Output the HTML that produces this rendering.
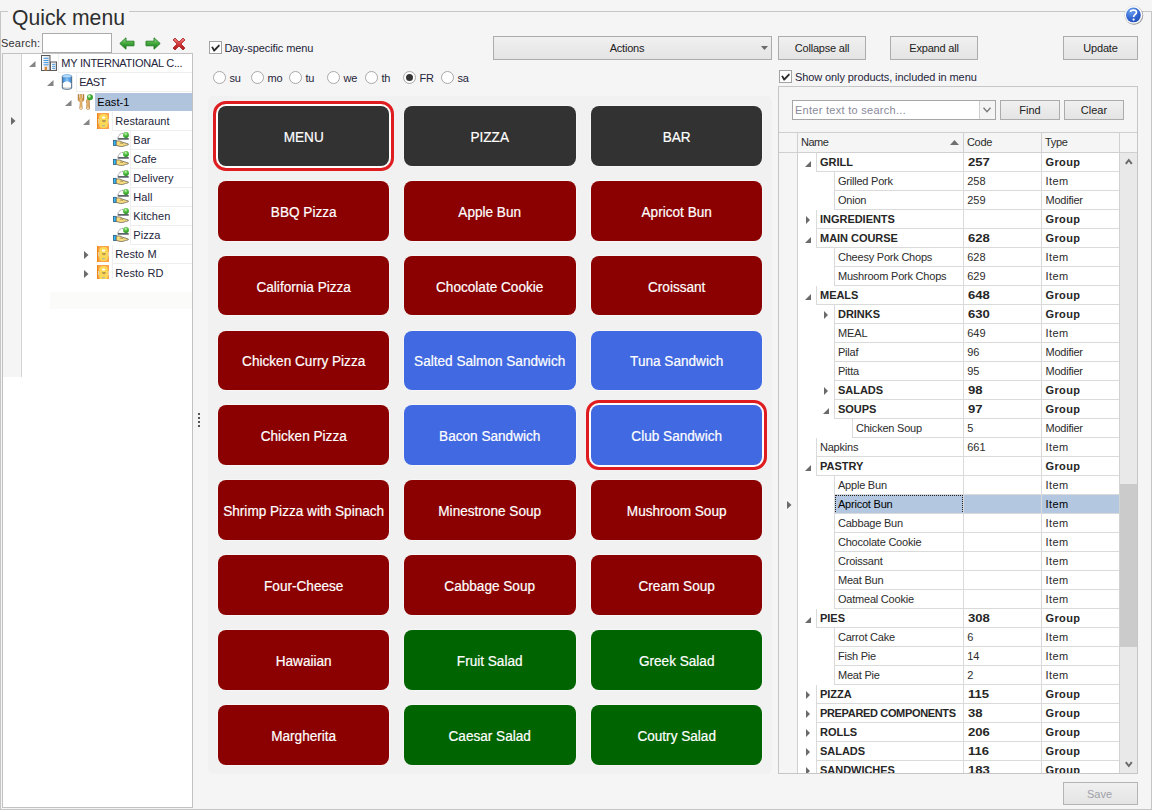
<!DOCTYPE html>
<html><head><meta charset="utf-8"><style>
*{box-sizing:border-box;margin:0;padding:0}
html,body{width:1152px;height:810px;overflow:hidden;background:#f5f5f5;font-family:"Liberation Sans",sans-serif;font-size:11px;color:#202020}
.a{position:absolute}
.t{position:absolute;white-space:nowrap;line-height:1}
.btn{position:absolute;border:1px solid #acacac;background:linear-gradient(#f0f0f0,#e4e4e4);}
.btn span{position:absolute;left:0;right:0;text-align:center;white-space:nowrap;line-height:1;color:#222}
.qb{position:absolute;border-radius:8px;color:#fff;font-size:14px;text-align:center;white-space:nowrap;box-shadow:0 0 0 0.5px rgba(255,255,255,0.75)}
.qb span{position:absolute;left:0;right:0;line-height:1;transform:scaleX(0.971);-webkit-text-stroke:0.2px #fff}
.ring{position:absolute;border:3px solid #df1c1f;border-radius:13px;background:#fff}
.g{position:absolute;white-space:nowrap;line-height:1;font-size:11px;letter-spacing:-0.32px;color:#2c2c2c}
.sel{color:#000}
.gb{font-weight:bold;letter-spacing:-0.38px;color:#262626}
</style></head><body>

<div class="a" style="left:0;top:11px;width:1152px;height:799px;border:1px solid #c6c6c6"></div>
<div class="a" style="left:8px;top:5px;width:121px;height:12px;background:#f5f5f5"></div>
<div class="t" style="left:12px;top:6.6px;font-size:22px;color:#2e2e2e;transform:scaleX(0.962);transform-origin:0 0">Quick menu</div>
<div class="t" style="left:1px;top:38px;font-size:11px;color:#333;letter-spacing:0.2px">Search:</div>
<div class="a" style="left:42px;top:33px;width:70px;height:20px;border:1px solid #ababab;background:#fff"></div>
<svg class="a" style="left:119px;top:37px" width="16" height="13" viewBox="0 0 16 13">
<defs><linearGradient id="gA" x1="0" y1="0" x2="0" y2="1"><stop offset="0" stop-color="#9ee08a"/><stop offset="0.5" stop-color="#3fa83a"/><stop offset="1" stop-color="#1d7a1d"/></linearGradient></defs>
<path d="M0.8 6.5 L7 0.8 L7 4.2 L15 4.2 L15 8.8 L7 8.8 L7 12.2 Z" fill="url(#gA)" stroke="#237a22" stroke-width="0.9" stroke-linejoin="round"/></svg>
<svg class="a" style="left:145px;top:37px" width="16" height="13" viewBox="0 0 16 13">
<path d="M15.2 6.5 L9 0.8 L9 4.2 L1 4.2 L1 8.8 L9 8.8 L9 12.2 Z" fill="url(#gA)" stroke="#237a22" stroke-width="0.9" stroke-linejoin="round"/></svg>
<svg class="a" style="left:172px;top:37px" width="14" height="14" viewBox="0 0 14 14">
<defs><linearGradient id="gX" x1="0" y1="0" x2="0" y2="1"><stop offset="0" stop-color="#f08a8a"/><stop offset="0.5" stop-color="#d43a3a"/><stop offset="1" stop-color="#a81818"/></linearGradient></defs>
<path d="M1 3 L3 1 L7 5 L11 1 L13 3 L9 7 L13 11 L11 13 L7 9 L3 13 L1 11 L5 7 Z" fill="url(#gX)" stroke="#a82020" stroke-width="0.8" stroke-linejoin="round"/></svg>
<div class="a" style="left:2px;top:53px;width:191px;height:755px;border:1px solid #c2c2c2;background:#fff;overflow:hidden">
<div class="a" style="left:0;top:0;width:19px;height:323px;background:#f5f5f5;border-right:1px solid #d4d4d4"></div>
<svg class="a" style="left:8px;top:63px" width="5" height="8" viewBox="0 0 5 8"><path d="M0 0 L4.5 4 L0 8Z" fill="#6b6b6b"/></svg>
<div class="a" style="left:0;top:0;width:189px;height:225px;overflow:hidden">
<div class="a" style="left:55px;top:0px;width:136px;height:19px;border-left:1px solid #eeeeee;border-bottom:1px solid #eeeeee"></div>
<svg class="a" style="left:26px;top:7px" width="7" height="6" viewBox="0 0 7 6"><path d="M6.5 0 L6.5 6 L0 6Z" fill="#858585"/></svg>
<div class="a" style="left:38px;top:1px;width:16px;height:16px"><svg width="16" height="16" viewBox="0 0 16 16"><defs><linearGradient id="bl" x1="0" x2="1"><stop offset="0" stop-color="#ffffff"/><stop offset="1" stop-color="#d8dde2"/></linearGradient></defs><rect x="0.5" y="0.5" width="8.5" height="15" fill="url(#bl)" stroke="#5a5a5a"/><g fill="#2f8ee0"><rect x="2.5" y="2.8" width="5" height="0.9"/><rect x="2.5" y="5" width="5" height="0.9"/><rect x="2.5" y="7.2" width="5" height="0.9"/><rect x="2.5" y="9.4" width="5" height="0.9"/></g><rect x="3.6" y="11.8" width="2.4" height="3.7" fill="#d8873a"/><rect x="9.5" y="7" width="6" height="8.5" fill="url(#bl)" stroke="#5a5a5a"/><g fill="#2f8ee0"><rect x="11" y="8.9" width="3.3" height="0.8"/><rect x="11" y="10.9" width="3.3" height="0.8"/><rect x="11" y="12.9" width="3.3" height="0.8"/></g></svg></div>
<div class="t" style="left:58.3px;top:4px;font-size:11px;color:#24243a;letter-spacing:-0.25px">MY INTERNATIONAL C...</div>
<div class="a" style="left:73px;top:19px;width:118px;height:19px;border-left:1px solid #eeeeee;border-bottom:1px solid #eeeeee"></div>
<svg class="a" style="left:44px;top:26px" width="7" height="6" viewBox="0 0 7 6"><path d="M6.5 0 L6.5 6 L0 6Z" fill="#858585"/></svg>
<div class="a" style="left:56px;top:20px;width:16px;height:16px"><svg width="16" height="16" viewBox="0 0 16 16"><defs><linearGradient id="cy" x1="0" x2="1"><stop offset="0" stop-color="#2f7fd4"/><stop offset="0.5" stop-color="#8cc6f4"/><stop offset="1" stop-color="#2f7fd4"/></linearGradient></defs><path d="M3.3 2.2 L3.3 14 C3.3 15.7 12.7 15.7 12.7 14 L12.7 2.2Z" fill="url(#cy)" stroke="#4a5560" stroke-width="0.8"/><ellipse cx="8" cy="2.2" rx="4.7" ry="1.7" fill="#b4dcfc" stroke="#3f86cc" stroke-width="0.5"/><path d="M3.9 9.6 C5 8.2 6.2 7.6 8 7.6 C9.8 7.6 11 8.2 12.1 9.6 L12.1 13.8 C12.1 15 3.9 15 3.9 13.8Z" fill="#fff"/><path d="M4 13.2 C5.5 14.4 10.5 14.4 12 13.2" fill="none" stroke="#9a9a9a" stroke-width="0.6"/></svg></div>
<div class="t" style="left:76.3px;top:23px;font-size:11px;color:#24243a;letter-spacing:-0.6px">EAST</div>
<div class="a" style="left:92px;top:39px;width:100px;height:18px;background:#b0c4de"></div>
<svg class="a" style="left:62px;top:46px" width="7" height="6" viewBox="0 0 7 6"><path d="M6.5 0 L6.5 6 L0 6Z" fill="#858585"/></svg>
<div class="a" style="left:74px;top:40px;width:16px;height:16px"><svg width="16" height="16" viewBox="0 0 16 16"><defs><linearGradient id="fk" x1="0" x2="1"><stop offset="0" stop-color="#c4863a"/><stop offset="0.5" stop-color="#f2c47e"/><stop offset="1" stop-color="#b4762c"/></linearGradient></defs><path d="M1 0.3 L1 5.5 C1 7 2.5 7.6 3.2 7.8 L2.6 14.6 C2.6 15.8 5.4 15.8 5.4 14.6 L4.8 7.8 C5.5 7.6 7 7 7 5.5 L7 0.3 L6 0.3 L6 4.5 L5 4.5 L5 0.3 L3 0.3 L3 4.5 L2 4.5 L2 0.3Z" fill="url(#fk)" stroke="#a86e2a" stroke-width="0.4"/><circle cx="4" cy="14.2" r="0.8" fill="#fff3d8"/><path d="M11.2 4 C9.6 5 8.7 8 9.8 9.5 L9.4 14.6 C9.4 15.8 12.6 15.8 12.6 14.6 L12.3 4Z" fill="url(#fk)" stroke="#a86e2a" stroke-width="0.4"/><circle cx="11" cy="14.2" r="0.8" fill="#fff3d8"/><circle cx="13" cy="3.2" r="3" fill="#3aa832"/><circle cx="12.3" cy="2.4" r="1.3" fill="#c0f0b0"/></svg></div>
<div class="t" style="left:94.3px;top:43px;font-size:11px;color:#000;letter-spacing:0.05px">East-1</div>
<div class="a" style="left:109px;top:58px;width:82px;height:19px;border-left:1px solid #eeeeee;border-bottom:1px solid #eeeeee"></div>
<svg class="a" style="left:80px;top:65px" width="7" height="6" viewBox="0 0 7 6"><path d="M6.5 0 L6.5 6 L0 6Z" fill="#858585"/></svg>
<div class="a" style="left:92px;top:59px;width:16px;height:16px"><svg width="16" height="16" viewBox="0 0 16 16"><rect x="2" y="0" width="12" height="16" fill="#fba24a"/><rect x="2" y="0" width="1.2" height="16" fill="#f28814"/><rect x="4.2" y="1" width="8.6" height="14" rx="3.8" fill="#fcd955"/><ellipse cx="8.5" cy="4.5" rx="1.7" ry="1.1" fill="#fff"/><path d="M6.9 6.9 L10.9 6.9 C10.6 8.8 9.6 9.3 8.9 9.3 C8.2 9.3 7.2 8.8 6.9 6.9Z" fill="#b89a50"/><path d="M7.1 13.3 L7.6 11.9 L8.5 12.5 L9.4 11.9 L9.9 13.3Z" fill="#8aa2c0"/><rect x="3.3" y="6" width="0.9" height="4.5" fill="#e4e2c8"/><rect x="12.8" y="6" width="0.9" height="4.5" fill="#e4e2c8"/></svg></div>
<div class="t" style="left:112.3px;top:62px;font-size:11px;color:#24243a;letter-spacing:0.05px">Restaraunt</div>
<div class="a" style="left:127px;top:77px;width:64px;height:19px;border-left:1px solid #eeeeee;border-bottom:1px solid #eeeeee"></div>
<div class="a" style="left:110px;top:78px;width:16px;height:16px"><svg width="16" height="16" viewBox="0 0 16 16"><defs><radialGradient id="gb" cx="0.45" cy="0.3" r="0.7"><stop offset="0" stop-color="#d8f8c8"/><stop offset="0.4" stop-color="#5cc84a"/><stop offset="1" stop-color="#1f8a1a"/></radialGradient></defs><path d="M4.9 6.2 C5.2 3.5 7.2 1.6 10 1.3" fill="none" stroke="#6a6a6a" stroke-width="0.8" stroke-dasharray="1 0.6"/><rect x="4.6" y="5.9" width="11.3" height="1.9" rx="0.9" fill="#5c646a"/><circle cx="13" cy="3" r="2.9" fill="url(#gb)"/><rect x="0.4" y="8.3" width="2.8" height="5.3" fill="#38b8f8" stroke="#20506e" stroke-width="0.7"/><path d="M3.2 9.2 C5 8.6 7.5 8.8 9.5 10.2 L15.5 12 C15.5 13 14 13.4 12.5 13.4 C11 14.5 8 14.8 6 14.2 L3.2 13.4Z" fill="#f8dc80" stroke="#3c3c3c" stroke-width="0.6"/><path d="M6.8 11.6 C7.5 10.8 9 10.8 10.2 11.8" fill="none" stroke="#5a5030" stroke-width="0.6"/></svg></div>
<div class="t" style="left:130.3px;top:81px;font-size:11px;color:#24243a;letter-spacing:0.05px">Bar</div>
<div class="a" style="left:127px;top:96px;width:64px;height:19px;border-left:1px solid #eeeeee;border-bottom:1px solid #eeeeee"></div>
<div class="a" style="left:110px;top:97px;width:16px;height:16px"><svg width="16" height="16" viewBox="0 0 16 16"><defs><radialGradient id="gb" cx="0.45" cy="0.3" r="0.7"><stop offset="0" stop-color="#d8f8c8"/><stop offset="0.4" stop-color="#5cc84a"/><stop offset="1" stop-color="#1f8a1a"/></radialGradient></defs><path d="M4.9 6.2 C5.2 3.5 7.2 1.6 10 1.3" fill="none" stroke="#6a6a6a" stroke-width="0.8" stroke-dasharray="1 0.6"/><rect x="4.6" y="5.9" width="11.3" height="1.9" rx="0.9" fill="#5c646a"/><circle cx="13" cy="3" r="2.9" fill="url(#gb)"/><rect x="0.4" y="8.3" width="2.8" height="5.3" fill="#38b8f8" stroke="#20506e" stroke-width="0.7"/><path d="M3.2 9.2 C5 8.6 7.5 8.8 9.5 10.2 L15.5 12 C15.5 13 14 13.4 12.5 13.4 C11 14.5 8 14.8 6 14.2 L3.2 13.4Z" fill="#f8dc80" stroke="#3c3c3c" stroke-width="0.6"/><path d="M6.8 11.6 C7.5 10.8 9 10.8 10.2 11.8" fill="none" stroke="#5a5030" stroke-width="0.6"/></svg></div>
<div class="t" style="left:130.3px;top:100px;font-size:11px;color:#24243a;letter-spacing:0.05px">Cafe</div>
<div class="a" style="left:127px;top:115px;width:64px;height:19px;border-left:1px solid #eeeeee;border-bottom:1px solid #eeeeee"></div>
<div class="a" style="left:110px;top:116px;width:16px;height:16px"><svg width="16" height="16" viewBox="0 0 16 16"><defs><radialGradient id="gb" cx="0.45" cy="0.3" r="0.7"><stop offset="0" stop-color="#d8f8c8"/><stop offset="0.4" stop-color="#5cc84a"/><stop offset="1" stop-color="#1f8a1a"/></radialGradient></defs><path d="M4.9 6.2 C5.2 3.5 7.2 1.6 10 1.3" fill="none" stroke="#6a6a6a" stroke-width="0.8" stroke-dasharray="1 0.6"/><rect x="4.6" y="5.9" width="11.3" height="1.9" rx="0.9" fill="#5c646a"/><circle cx="13" cy="3" r="2.9" fill="url(#gb)"/><rect x="0.4" y="8.3" width="2.8" height="5.3" fill="#38b8f8" stroke="#20506e" stroke-width="0.7"/><path d="M3.2 9.2 C5 8.6 7.5 8.8 9.5 10.2 L15.5 12 C15.5 13 14 13.4 12.5 13.4 C11 14.5 8 14.8 6 14.2 L3.2 13.4Z" fill="#f8dc80" stroke="#3c3c3c" stroke-width="0.6"/><path d="M6.8 11.6 C7.5 10.8 9 10.8 10.2 11.8" fill="none" stroke="#5a5030" stroke-width="0.6"/></svg></div>
<div class="t" style="left:130.3px;top:119px;font-size:11px;color:#24243a;letter-spacing:0.05px">Delivery</div>
<div class="a" style="left:127px;top:134px;width:64px;height:19px;border-left:1px solid #eeeeee;border-bottom:1px solid #eeeeee"></div>
<div class="a" style="left:110px;top:135px;width:16px;height:16px"><svg width="16" height="16" viewBox="0 0 16 16"><defs><radialGradient id="gb" cx="0.45" cy="0.3" r="0.7"><stop offset="0" stop-color="#d8f8c8"/><stop offset="0.4" stop-color="#5cc84a"/><stop offset="1" stop-color="#1f8a1a"/></radialGradient></defs><path d="M4.9 6.2 C5.2 3.5 7.2 1.6 10 1.3" fill="none" stroke="#6a6a6a" stroke-width="0.8" stroke-dasharray="1 0.6"/><rect x="4.6" y="5.9" width="11.3" height="1.9" rx="0.9" fill="#5c646a"/><circle cx="13" cy="3" r="2.9" fill="url(#gb)"/><rect x="0.4" y="8.3" width="2.8" height="5.3" fill="#38b8f8" stroke="#20506e" stroke-width="0.7"/><path d="M3.2 9.2 C5 8.6 7.5 8.8 9.5 10.2 L15.5 12 C15.5 13 14 13.4 12.5 13.4 C11 14.5 8 14.8 6 14.2 L3.2 13.4Z" fill="#f8dc80" stroke="#3c3c3c" stroke-width="0.6"/><path d="M6.8 11.6 C7.5 10.8 9 10.8 10.2 11.8" fill="none" stroke="#5a5030" stroke-width="0.6"/></svg></div>
<div class="t" style="left:130.3px;top:138px;font-size:11px;color:#24243a;letter-spacing:0.05px">Hall</div>
<div class="a" style="left:127px;top:153px;width:64px;height:19px;border-left:1px solid #eeeeee;border-bottom:1px solid #eeeeee"></div>
<div class="a" style="left:110px;top:154px;width:16px;height:16px"><svg width="16" height="16" viewBox="0 0 16 16"><defs><radialGradient id="gb" cx="0.45" cy="0.3" r="0.7"><stop offset="0" stop-color="#d8f8c8"/><stop offset="0.4" stop-color="#5cc84a"/><stop offset="1" stop-color="#1f8a1a"/></radialGradient></defs><path d="M4.9 6.2 C5.2 3.5 7.2 1.6 10 1.3" fill="none" stroke="#6a6a6a" stroke-width="0.8" stroke-dasharray="1 0.6"/><rect x="4.6" y="5.9" width="11.3" height="1.9" rx="0.9" fill="#5c646a"/><circle cx="13" cy="3" r="2.9" fill="url(#gb)"/><rect x="0.4" y="8.3" width="2.8" height="5.3" fill="#38b8f8" stroke="#20506e" stroke-width="0.7"/><path d="M3.2 9.2 C5 8.6 7.5 8.8 9.5 10.2 L15.5 12 C15.5 13 14 13.4 12.5 13.4 C11 14.5 8 14.8 6 14.2 L3.2 13.4Z" fill="#f8dc80" stroke="#3c3c3c" stroke-width="0.6"/><path d="M6.8 11.6 C7.5 10.8 9 10.8 10.2 11.8" fill="none" stroke="#5a5030" stroke-width="0.6"/></svg></div>
<div class="t" style="left:130.3px;top:157px;font-size:11px;color:#24243a;letter-spacing:0.05px">Kitchen</div>
<div class="a" style="left:127px;top:172px;width:64px;height:19px;border-left:1px solid #eeeeee;border-bottom:1px solid #eeeeee"></div>
<div class="a" style="left:110px;top:173px;width:16px;height:16px"><svg width="16" height="16" viewBox="0 0 16 16"><defs><radialGradient id="gb" cx="0.45" cy="0.3" r="0.7"><stop offset="0" stop-color="#d8f8c8"/><stop offset="0.4" stop-color="#5cc84a"/><stop offset="1" stop-color="#1f8a1a"/></radialGradient></defs><path d="M4.9 6.2 C5.2 3.5 7.2 1.6 10 1.3" fill="none" stroke="#6a6a6a" stroke-width="0.8" stroke-dasharray="1 0.6"/><rect x="4.6" y="5.9" width="11.3" height="1.9" rx="0.9" fill="#5c646a"/><circle cx="13" cy="3" r="2.9" fill="url(#gb)"/><rect x="0.4" y="8.3" width="2.8" height="5.3" fill="#38b8f8" stroke="#20506e" stroke-width="0.7"/><path d="M3.2 9.2 C5 8.6 7.5 8.8 9.5 10.2 L15.5 12 C15.5 13 14 13.4 12.5 13.4 C11 14.5 8 14.8 6 14.2 L3.2 13.4Z" fill="#f8dc80" stroke="#3c3c3c" stroke-width="0.6"/><path d="M6.8 11.6 C7.5 10.8 9 10.8 10.2 11.8" fill="none" stroke="#5a5030" stroke-width="0.6"/></svg></div>
<div class="t" style="left:130.3px;top:176px;font-size:11px;color:#24243a;letter-spacing:0.05px">Pizza</div>
<div class="a" style="left:109px;top:191px;width:82px;height:19px;border-left:1px solid #eeeeee;border-bottom:1px solid #eeeeee"></div>
<svg class="a" style="left:81px;top:197px" width="5" height="8" viewBox="0 0 5 8"><path d="M0 0 L4.5 4 L0 8Z" fill="#6b6b6b"/></svg>
<div class="a" style="left:92px;top:192px;width:16px;height:16px"><svg width="16" height="16" viewBox="0 0 16 16"><rect x="2" y="0" width="12" height="16" fill="#fba24a"/><rect x="2" y="0" width="1.2" height="16" fill="#f28814"/><rect x="4.2" y="1" width="8.6" height="14" rx="3.8" fill="#fcd955"/><ellipse cx="8.5" cy="4.5" rx="1.7" ry="1.1" fill="#fff"/><path d="M6.9 6.9 L10.9 6.9 C10.6 8.8 9.6 9.3 8.9 9.3 C8.2 9.3 7.2 8.8 6.9 6.9Z" fill="#b89a50"/><path d="M7.1 13.3 L7.6 11.9 L8.5 12.5 L9.4 11.9 L9.9 13.3Z" fill="#8aa2c0"/><rect x="3.3" y="6" width="0.9" height="4.5" fill="#e4e2c8"/><rect x="12.8" y="6" width="0.9" height="4.5" fill="#e4e2c8"/></svg></div>
<div class="t" style="left:112.3px;top:195px;font-size:11px;color:#24243a;letter-spacing:0.05px">Resto M</div>
<div class="a" style="left:109px;top:210px;width:82px;height:19px;border-left:1px solid #eeeeee;border-bottom:1px solid #eeeeee"></div>
<svg class="a" style="left:81px;top:216px" width="5" height="8" viewBox="0 0 5 8"><path d="M0 0 L4.5 4 L0 8Z" fill="#6b6b6b"/></svg>
<div class="a" style="left:92px;top:211px;width:16px;height:16px"><svg width="16" height="16" viewBox="0 0 16 16"><rect x="2" y="0" width="12" height="16" fill="#fba24a"/><rect x="2" y="0" width="1.2" height="16" fill="#f28814"/><rect x="4.2" y="1" width="8.6" height="14" rx="3.8" fill="#fcd955"/><ellipse cx="8.5" cy="4.5" rx="1.7" ry="1.1" fill="#fff"/><path d="M6.9 6.9 L10.9 6.9 C10.6 8.8 9.6 9.3 8.9 9.3 C8.2 9.3 7.2 8.8 6.9 6.9Z" fill="#b89a50"/><path d="M7.1 13.3 L7.6 11.9 L8.5 12.5 L9.4 11.9 L9.9 13.3Z" fill="#8aa2c0"/><rect x="3.3" y="6" width="0.9" height="4.5" fill="#e4e2c8"/><rect x="12.8" y="6" width="0.9" height="4.5" fill="#e4e2c8"/></svg></div>
<div class="t" style="left:112.3px;top:214px;font-size:11px;color:#24243a;letter-spacing:0.05px">Resto RD</div>
</div>
</div>
<div class="a" style="left:50px;top:291.5px;width:142px;height:17px;background:#fbfcfa"></div>
<div class="a" style="left:198px;top:413px;width:2px;height:2px;background:#555"></div>
<div class="a" style="left:198px;top:417px;width:2px;height:2px;background:#555"></div>
<div class="a" style="left:198px;top:421px;width:2px;height:2px;background:#555"></div>
<div class="a" style="left:198px;top:425px;width:2px;height:2px;background:#555"></div>
<div class="a" style="left:209px;top:41px;width:13px;height:13px;border:1px solid #a3a3a3;background:#fff"></div>
<svg class="a" style="left:211px;top:44px" width="10" height="8" viewBox="0 0 10 8"><path d="M0.2 3 L1.9 2.4 L3.3 5 L8 0.2 L8.9 2 L3.6 7.4 L2.6 7.4Z" fill="#2e2e2e"/></svg>
<div class="t" style="left:224.5px;top:43px;font-size:11px;color:#24243a;letter-spacing:-0.1px">Day-specific menu</div>
<div class="a" style="left:212.5px;top:70.5px;width:13px;height:13px;border:1px solid #a8a8a8;border-radius:50%;background:#fff"></div>
<div class="t" style="left:229.5px;top:73px;font-size:11px;color:#24243a;letter-spacing:-0.2px">su</div>
<div class="a" style="left:250.5px;top:70.5px;width:13px;height:13px;border:1px solid #a8a8a8;border-radius:50%;background:#fff"></div>
<div class="t" style="left:267.5px;top:73px;font-size:11px;color:#24243a;letter-spacing:-0.2px">mo</div>
<div class="a" style="left:288.5px;top:70.5px;width:13px;height:13px;border:1px solid #a8a8a8;border-radius:50%;background:#fff"></div>
<div class="t" style="left:305.5px;top:73px;font-size:11px;color:#24243a;letter-spacing:-0.2px">tu</div>
<div class="a" style="left:326.5px;top:70.5px;width:13px;height:13px;border:1px solid #a8a8a8;border-radius:50%;background:#fff"></div>
<div class="t" style="left:343.5px;top:73px;font-size:11px;color:#24243a;letter-spacing:-0.2px">we</div>
<div class="a" style="left:364.5px;top:70.5px;width:13px;height:13px;border:1px solid #a8a8a8;border-radius:50%;background:#fff"></div>
<div class="t" style="left:381.5px;top:73px;font-size:11px;color:#24243a;letter-spacing:-0.2px">th</div>
<div class="a" style="left:402.5px;top:70.5px;width:13px;height:13px;border:1px solid #a8a8a8;border-radius:50%;background:#fff"></div>
<div class="a" style="left:405.5px;top:73.5px;width:7px;height:7px;border-radius:50%;background:#353535"></div>
<div class="t" style="left:419.5px;top:73px;font-size:11px;color:#24243a;letter-spacing:-0.2px">FR</div>
<div class="a" style="left:440.5px;top:70.5px;width:13px;height:13px;border:1px solid #a8a8a8;border-radius:50%;background:#fff"></div>
<div class="t" style="left:457.5px;top:73px;font-size:11px;color:#24243a;letter-spacing:-0.2px">sa</div>
<div class="a" style="left:207.65px;top:96px;width:564.35px;height:678.4px;background:#f1f1f1;border-radius:5px"></div>
<div class="ring" style="left:213.00px;top:101.00px;width:181.40px;height:69.80px"></div>
<div class="qb" style="left:218.00px;top:106.00px;width:171.40px;height:59.80px;background:#323232"><span style="top:23.9px">MENU</span></div>
<div class="qb" style="left:404.30px;top:106.00px;width:171.40px;height:59.80px;background:#323232"><span style="top:23.9px">PIZZA</span></div>
<div class="qb" style="left:590.90px;top:106.00px;width:171.40px;height:59.80px;background:#323232"><span style="top:23.9px">BAR</span></div>
<div class="qb" style="left:218.00px;top:180.85px;width:171.40px;height:59.80px;background:#8b0000"><span style="top:23.9px">BBQ Pizza</span></div>
<div class="qb" style="left:404.30px;top:180.85px;width:171.40px;height:59.80px;background:#8b0000"><span style="top:23.9px">Apple Bun</span></div>
<div class="qb" style="left:590.90px;top:180.85px;width:171.40px;height:59.80px;background:#8b0000"><span style="top:23.9px">Apricot Bun</span></div>
<div class="qb" style="left:218.00px;top:255.70px;width:171.40px;height:59.80px;background:#8b0000"><span style="top:23.9px">California Pizza</span></div>
<div class="qb" style="left:404.30px;top:255.70px;width:171.40px;height:59.80px;background:#8b0000"><span style="top:23.9px">Chocolate Cookie</span></div>
<div class="qb" style="left:590.90px;top:255.70px;width:171.40px;height:59.80px;background:#8b0000"><span style="top:23.9px">Croissant</span></div>
<div class="qb" style="left:218.00px;top:330.55px;width:171.40px;height:59.80px;background:#8b0000"><span style="top:23.9px">Chicken Curry Pizza</span></div>
<div class="qb" style="left:404.30px;top:330.55px;width:171.40px;height:59.80px;background:#4169e1"><span style="top:23.9px">Salted Salmon Sandwich</span></div>
<div class="qb" style="left:590.90px;top:330.55px;width:171.40px;height:59.80px;background:#4169e1"><span style="top:23.9px">Tuna Sandwich</span></div>
<div class="qb" style="left:218.00px;top:405.40px;width:171.40px;height:59.80px;background:#8b0000"><span style="top:23.9px">Chicken Pizza</span></div>
<div class="qb" style="left:404.30px;top:405.40px;width:171.40px;height:59.80px;background:#4169e1"><span style="top:23.9px">Bacon Sandwich</span></div>
<div class="ring" style="left:585.90px;top:400.40px;width:181.40px;height:69.80px"></div>
<div class="qb" style="left:590.90px;top:405.40px;width:171.40px;height:59.80px;background:#4169e1"><span style="top:23.9px">Club Sandwich</span></div>
<div class="qb" style="left:218.00px;top:480.25px;width:171.40px;height:59.80px;background:#8b0000"><span style="top:23.9px">Shrimp Pizza with Spinach</span></div>
<div class="qb" style="left:404.30px;top:480.25px;width:171.40px;height:59.80px;background:#8b0000"><span style="top:23.9px">Minestrone Soup</span></div>
<div class="qb" style="left:590.90px;top:480.25px;width:171.40px;height:59.80px;background:#8b0000"><span style="top:23.9px">Mushroom Soup</span></div>
<div class="qb" style="left:218.00px;top:555.10px;width:171.40px;height:59.80px;background:#8b0000"><span style="top:23.9px">Four-Cheese</span></div>
<div class="qb" style="left:404.30px;top:555.10px;width:171.40px;height:59.80px;background:#8b0000"><span style="top:23.9px">Cabbage Soup</span></div>
<div class="qb" style="left:590.90px;top:555.10px;width:171.40px;height:59.80px;background:#8b0000"><span style="top:23.9px">Cream Soup</span></div>
<div class="qb" style="left:218.00px;top:629.95px;width:171.40px;height:59.80px;background:#8b0000"><span style="top:23.9px">Hawaiian</span></div>
<div class="qb" style="left:404.30px;top:629.95px;width:171.40px;height:59.80px;background:#006400"><span style="top:23.9px">Fruit Salad</span></div>
<div class="qb" style="left:590.90px;top:629.95px;width:171.40px;height:59.80px;background:#006400"><span style="top:23.9px">Greek Salad</span></div>
<div class="qb" style="left:218.00px;top:704.80px;width:171.40px;height:59.80px;background:#8b0000"><span style="top:23.9px">Margherita</span></div>
<div class="qb" style="left:404.30px;top:704.80px;width:171.40px;height:59.80px;background:#006400"><span style="top:23.9px">Caesar Salad</span></div>
<div class="qb" style="left:590.90px;top:704.80px;width:171.40px;height:59.80px;background:#006400"><span style="top:23.9px">Coutry Salad</span></div>
<div class="btn" style="left:493px;top:36px;width:279px;height:24px"><span style="top:6px;right:11px;font-size:11px;letter-spacing:-0.2px">Actions</span></div>
<svg class="a" style="left:761px;top:46px" width="7" height="4" viewBox="0 0 7 4"><path d="M0 0 L7 0 L3.5 4Z" fill="#6a6a6a"/></svg>
<div class="btn" style="left:778px;top:36px;width:88px;height:24px"><span style="top:6px;font-size:11px;letter-spacing:-0.2px">Collapse all</span></div>
<div class="btn" style="left:890px;top:36px;width:88px;height:24px"><span style="top:6px;font-size:11px;letter-spacing:-0.2px">Expand all</span></div>
<div class="btn" style="left:1063px;top:36px;width:75px;height:24px"><span style="top:6px;font-size:11px;letter-spacing:-0.2px">Update</span></div>
<svg class="a" style="left:1123px;top:4px" width="22" height="22" viewBox="0 0 22 22">
<defs><radialGradient id="hg" cx="0.35" cy="0.25" r="0.85"><stop offset="0" stop-color="#6aa2f0"/><stop offset="0.6" stop-color="#3366d0"/><stop offset="1" stop-color="#1e4cb0"/></radialGradient></defs>
<circle cx="11" cy="11.5" r="9.2" fill="#3a3a3a" opacity="0.55"/>
<circle cx="10.5" cy="10.8" r="9" fill="#fff" stroke="#c8c8c8" stroke-width="0.4"/>
<circle cx="10.4" cy="10.9" r="7.4" fill="url(#hg)"/>
<path d="M7.4 8 C7.4 5.4 13.5 5.3 13.5 8.2 C13.5 10.3 10.6 10.6 10.6 13.1" fill="none" stroke="#fff" stroke-width="1.7"/>
<circle cx="10.6" cy="15.6" r="1.15" fill="#fff"/></svg>
<div class="a" style="left:779px;top:70px;width:13px;height:13px;border:1px solid #a3a3a3;background:#fff"></div>
<svg class="a" style="left:781px;top:73px" width="10" height="8" viewBox="0 0 10 8"><path d="M0.2 3 L1.9 2.4 L3.3 5 L8 0.2 L8.9 2 L3.6 7.4 L2.6 7.4Z" fill="#2e2e2e"/></svg>
<div class="t" style="left:795px;top:72px;font-size:11px;color:#24243a;letter-spacing:-0.1px">Show only products, included in menu</div>
<div class="a" style="left:778px;top:86px;width:360px;height:688px;border:1px solid #c6c6c6"></div>
<div class="a" style="left:792px;top:100px;width:204px;height:20px;border:1px solid #a6a6a6;background:#fff"></div>
<div class="a" style="left:979px;top:101px;width:16px;height:18px;border-left:1px solid #cfcfcf;background:#f4f4f4"></div>
<svg class="a" style="left:983px;top:107px" width="8" height="6" viewBox="0 0 8 6"><path d="M0.5 0.8 L4 4.8 L7.5 0.8" fill="none" stroke="#7a7a7a" stroke-width="1.4"/></svg>
<div class="t" style="left:795px;top:105px;font-size:11px;color:#8a8a9a;letter-spacing:0.28px">Enter text to search...</div>
<div class="btn" style="left:1000px;top:100px;width:60px;height:20px"><span style="top:4px;font-size:11px">Find</span></div>
<div class="btn" style="left:1064px;top:100px;width:60px;height:20px"><span style="top:4px;font-size:11px">Clear</span></div>
<div class="a" style="left:779px;top:132px;width:358px;height:641px;background:#fff;overflow:hidden">
<div class="a" style="left:0;top:0;width:358px;height:21px;background:#f5f5f5;border-top:1px solid #cfcfcf;border-bottom:1px solid #d0d0d0"></div>
<div class="a" style="left:0;top:21px;width:19px;height:620px;background:#f5f5f5;border-right:1px solid #cfcfcf"></div>
<div class="a" style="left:18px;top:0;width:1px;height:20px;background:#d0d0d0"></div>
<div class="a" style="left:184px;top:0;width:1px;height:20px;background:#d0d0d0"></div>
<div class="a" style="left:262px;top:0;width:1px;height:20px;background:#d0d0d0"></div>
<div class="a" style="left:340px;top:0;width:1px;height:20px;background:#d0d0d0"></div>
<div class="g" style="left:22px;top:5px;letter-spacing:-0.5px">Name</div>
<svg class="a" style="left:171px;top:8px" width="9" height="5" viewBox="0 0 9 5"><path d="M0 5 L4.5 0 L9 5Z" fill="#707070"/></svg>
<div class="g" style="left:188px;top:5px">Code</div>
<div class="g" style="left:266px;top:5px">Type</div>
<div class="a" style="left:340px;top:21px;width:18px;height:621px;background:#e9e9e9;border-left:1px solid #d2d2d2"></div>
<div class="a" style="left:341px;top:351.5px;width:17px;height:163.4px;background:#cbcbcb"></div>
<svg class="a" style="left:345.5px;top:26px" width="8" height="7" viewBox="0 0 8 7"><path d="M0.8 5.8 L3.8 2 L6.8 5.8" fill="none" stroke="#6a6a6a" stroke-width="2"/></svg>
<svg class="a" style="left:345.5px;top:629px" width="8" height="7" viewBox="0 0 8 7"><path d="M0.8 1.2 L3.8 5 L6.8 1.2" fill="none" stroke="#6a6a6a" stroke-width="2"/></svg>
<div class="a" style="left:37px;top:21px;width:303px;height:19px;border-left:1px solid #dadada;border-bottom:1px solid #dadada"></div>
<svg class="a" style="left:26px;top:29px" width="6" height="6" viewBox="0 0 6 6"><path d="M6 0 L6 6 L0 6Z" fill="#6a6a6a"/></svg>
<div class="g gb" style="left:41px;top:25px;letter-spacing:-0.03px">GRILL</div>
<div class="g gb" style="left:189px;top:25px;letter-spacing:0.0px;transform:scaleX(1.19);transform-origin:0 0">257</div>
<div class="g gb" style="left:266.5px;top:25px;letter-spacing:0.37px">Group</div>
<div class="a" style="left:55px;top:40px;width:285px;height:19px;border-left:1px solid #dadada;border-bottom:1px solid #dadada"></div>
<div class="g" style="left:59px;top:44px;letter-spacing:-0.22px">Grilled Pork</div>
<div class="g" style="left:188.2px;top:44px;letter-spacing:0.0px;">258</div>
<div class="g" style="left:266.5px;top:44px;letter-spacing:0.45px">Item</div>
<div class="a" style="left:55px;top:59px;width:285px;height:19px;border-left:1px solid #dadada;border-bottom:1px solid #dadada"></div>
<div class="g" style="left:59px;top:63px;letter-spacing:-0.22px">Onion</div>
<div class="g" style="left:188.2px;top:63px;letter-spacing:0.0px;">259</div>
<div class="g" style="left:266.5px;top:63px;letter-spacing:-0.23px">Modifier</div>
<div class="a" style="left:37px;top:78px;width:303px;height:19px;border-left:1px solid #dadada;border-bottom:1px solid #dadada"></div>
<svg class="a" style="left:27px;top:84px" width="5" height="8" viewBox="0 0 5 8"><path d="M0 0 L4 4 L0 8Z" fill="#6a6a6a"/></svg>
<div class="g gb" style="left:41px;top:82px;letter-spacing:-0.03px">INGREDIENTS</div>
<div class="g gb" style="left:266.5px;top:82px;letter-spacing:0.37px">Group</div>
<div class="a" style="left:37px;top:97px;width:303px;height:19px;border-left:1px solid #dadada;border-bottom:1px solid #dadada"></div>
<svg class="a" style="left:26px;top:105px" width="6" height="6" viewBox="0 0 6 6"><path d="M6 0 L6 6 L0 6Z" fill="#6a6a6a"/></svg>
<div class="g gb" style="left:41px;top:101px;letter-spacing:-0.03px">MAIN COURSE</div>
<div class="g gb" style="left:189px;top:101px;letter-spacing:0.0px;transform:scaleX(1.19);transform-origin:0 0">628</div>
<div class="g gb" style="left:266.5px;top:101px;letter-spacing:0.37px">Group</div>
<div class="a" style="left:55px;top:116px;width:285px;height:19px;border-left:1px solid #dadada;border-bottom:1px solid #dadada"></div>
<div class="g" style="left:59px;top:120px;letter-spacing:-0.22px">Cheesy Pork Chops</div>
<div class="g" style="left:188.2px;top:120px;letter-spacing:0.0px;">628</div>
<div class="g" style="left:266.5px;top:120px;letter-spacing:0.45px">Item</div>
<div class="a" style="left:55px;top:135px;width:285px;height:19px;border-left:1px solid #dadada;border-bottom:1px solid #dadada"></div>
<div class="g" style="left:59px;top:139px;letter-spacing:-0.22px">Mushroom Pork Chops</div>
<div class="g" style="left:188.2px;top:139px;letter-spacing:0.0px;">629</div>
<div class="g" style="left:266.5px;top:139px;letter-spacing:0.45px">Item</div>
<div class="a" style="left:37px;top:154px;width:303px;height:19px;border-left:1px solid #dadada;border-bottom:1px solid #dadada"></div>
<svg class="a" style="left:26px;top:162px" width="6" height="6" viewBox="0 0 6 6"><path d="M6 0 L6 6 L0 6Z" fill="#6a6a6a"/></svg>
<div class="g gb" style="left:41px;top:158px;letter-spacing:-0.03px">MEALS</div>
<div class="g gb" style="left:189px;top:158px;letter-spacing:0.0px;transform:scaleX(1.19);transform-origin:0 0">648</div>
<div class="g gb" style="left:266.5px;top:158px;letter-spacing:0.37px">Group</div>
<div class="a" style="left:55px;top:173px;width:285px;height:19px;border-left:1px solid #dadada;border-bottom:1px solid #dadada"></div>
<svg class="a" style="left:45px;top:179px" width="5" height="8" viewBox="0 0 5 8"><path d="M0 0 L4 4 L0 8Z" fill="#6a6a6a"/></svg>
<div class="g gb" style="left:59px;top:177px;letter-spacing:-0.03px">DRINKS</div>
<div class="g gb" style="left:189px;top:177px;letter-spacing:0.0px;transform:scaleX(1.19);transform-origin:0 0">630</div>
<div class="g gb" style="left:266.5px;top:177px;letter-spacing:0.37px">Group</div>
<div class="a" style="left:55px;top:192px;width:285px;height:19px;border-left:1px solid #dadada;border-bottom:1px solid #dadada"></div>
<div class="g" style="left:59px;top:196px;letter-spacing:-0.1px">MEAL</div>
<div class="g" style="left:188.2px;top:196px;letter-spacing:0.0px;">649</div>
<div class="g" style="left:266.5px;top:196px;letter-spacing:0.45px">Item</div>
<div class="a" style="left:55px;top:211px;width:285px;height:19px;border-left:1px solid #dadada;border-bottom:1px solid #dadada"></div>
<div class="g" style="left:59px;top:215px;letter-spacing:-0.22px">Pilaf</div>
<div class="g" style="left:188.2px;top:215px;letter-spacing:0.0px;">96</div>
<div class="g" style="left:266.5px;top:215px;letter-spacing:-0.23px">Modifier</div>
<div class="a" style="left:55px;top:230px;width:285px;height:19px;border-left:1px solid #dadada;border-bottom:1px solid #dadada"></div>
<div class="g" style="left:59px;top:234px;letter-spacing:-0.22px">Pitta</div>
<div class="g" style="left:188.2px;top:234px;letter-spacing:0.0px;">95</div>
<div class="g" style="left:266.5px;top:234px;letter-spacing:-0.23px">Modifier</div>
<div class="a" style="left:55px;top:249px;width:285px;height:19px;border-left:1px solid #dadada;border-bottom:1px solid #dadada"></div>
<svg class="a" style="left:45px;top:255px" width="5" height="8" viewBox="0 0 5 8"><path d="M0 0 L4 4 L0 8Z" fill="#6a6a6a"/></svg>
<div class="g gb" style="left:59px;top:253px;letter-spacing:-0.03px">SALADS</div>
<div class="g gb" style="left:189px;top:253px;letter-spacing:0.0px;transform:scaleX(1.19);transform-origin:0 0">98</div>
<div class="g gb" style="left:266.5px;top:253px;letter-spacing:0.37px">Group</div>
<div class="a" style="left:55px;top:268px;width:285px;height:19px;border-left:1px solid #dadada;border-bottom:1px solid #dadada"></div>
<svg class="a" style="left:44px;top:276px" width="6" height="6" viewBox="0 0 6 6"><path d="M6 0 L6 6 L0 6Z" fill="#6a6a6a"/></svg>
<div class="g gb" style="left:59px;top:272px;letter-spacing:-0.03px">SOUPS</div>
<div class="g gb" style="left:189px;top:272px;letter-spacing:0.0px;transform:scaleX(1.19);transform-origin:0 0">97</div>
<div class="g gb" style="left:266.5px;top:272px;letter-spacing:0.37px">Group</div>
<div class="a" style="left:73px;top:287px;width:267px;height:19px;border-left:1px solid #dadada;border-bottom:1px solid #dadada"></div>
<div class="g" style="left:77px;top:291px;letter-spacing:-0.22px">Chicken Soup</div>
<div class="g" style="left:188.2px;top:291px;letter-spacing:0.0px;">5</div>
<div class="g" style="left:266.5px;top:291px;letter-spacing:-0.23px">Modifier</div>
<div class="a" style="left:37px;top:306px;width:303px;height:19px;border-left:1px solid #dadada;border-bottom:1px solid #dadada"></div>
<div class="g" style="left:41px;top:310px;letter-spacing:-0.22px">Napkins</div>
<div class="g" style="left:188.2px;top:310px;letter-spacing:0.0px;">661</div>
<div class="g" style="left:266.5px;top:310px;letter-spacing:0.45px">Item</div>
<div class="a" style="left:37px;top:325px;width:303px;height:19px;border-left:1px solid #dadada;border-bottom:1px solid #dadada"></div>
<svg class="a" style="left:26px;top:333px" width="6" height="6" viewBox="0 0 6 6"><path d="M6 0 L6 6 L0 6Z" fill="#6a6a6a"/></svg>
<div class="g gb" style="left:41px;top:329px;letter-spacing:-0.03px">PASTRY</div>
<div class="g gb" style="left:266.5px;top:329px;letter-spacing:0.37px">Group</div>
<div class="a" style="left:55px;top:344px;width:285px;height:19px;border-left:1px solid #dadada;border-bottom:1px solid #dadada"></div>
<div class="g" style="left:59px;top:348px;letter-spacing:-0.22px">Apple Bun</div>
<div class="g" style="left:266.5px;top:348px;letter-spacing:0.45px">Item</div>
<div class="a" style="left:56px;top:363px;width:284px;height:18px;background:#b3c7e1"></div>
<div class="a" style="left:56px;top:363px;width:128px;height:19px;border:1px dotted #222"></div>
<svg class="a" style="left:8px;top:369px" width="5" height="8" viewBox="0 0 5 8"><path d="M0 0 L4.5 4 L0 8Z" fill="#6b6b6b"/></svg>
<div class="a" style="left:55px;top:363px;width:285px;height:19px;border-left:1px solid #dadada;border-bottom:1px solid #dadada"></div>
<div class="g sel" style="left:59px;top:367px;letter-spacing:-0.22px">Apricot Bun</div>
<div class="g sel" style="left:266.5px;top:367px;letter-spacing:0.45px">Item</div>
<div class="a" style="left:55px;top:382px;width:285px;height:19px;border-left:1px solid #dadada;border-bottom:1px solid #dadada"></div>
<div class="g" style="left:59px;top:386px;letter-spacing:-0.22px">Cabbage Bun</div>
<div class="g" style="left:266.5px;top:386px;letter-spacing:0.45px">Item</div>
<div class="a" style="left:55px;top:401px;width:285px;height:19px;border-left:1px solid #dadada;border-bottom:1px solid #dadada"></div>
<div class="g" style="left:59px;top:405px;letter-spacing:-0.22px">Chocolate Cookie</div>
<div class="g" style="left:266.5px;top:405px;letter-spacing:0.45px">Item</div>
<div class="a" style="left:55px;top:420px;width:285px;height:19px;border-left:1px solid #dadada;border-bottom:1px solid #dadada"></div>
<div class="g" style="left:59px;top:424px;letter-spacing:-0.22px">Croissant</div>
<div class="g" style="left:266.5px;top:424px;letter-spacing:0.45px">Item</div>
<div class="a" style="left:55px;top:439px;width:285px;height:19px;border-left:1px solid #dadada;border-bottom:1px solid #dadada"></div>
<div class="g" style="left:59px;top:443px;letter-spacing:-0.22px">Meat Bun</div>
<div class="g" style="left:266.5px;top:443px;letter-spacing:0.45px">Item</div>
<div class="a" style="left:55px;top:458px;width:285px;height:19px;border-left:1px solid #dadada;border-bottom:1px solid #dadada"></div>
<div class="g" style="left:59px;top:462px;letter-spacing:-0.22px">Oatmeal Cookie</div>
<div class="g" style="left:266.5px;top:462px;letter-spacing:0.45px">Item</div>
<div class="a" style="left:37px;top:477px;width:303px;height:19px;border-left:1px solid #dadada;border-bottom:1px solid #dadada"></div>
<svg class="a" style="left:26px;top:485px" width="6" height="6" viewBox="0 0 6 6"><path d="M6 0 L6 6 L0 6Z" fill="#6a6a6a"/></svg>
<div class="g gb" style="left:41px;top:481px;letter-spacing:-0.03px">PIES</div>
<div class="g gb" style="left:189px;top:481px;letter-spacing:0.0px;transform:scaleX(1.19);transform-origin:0 0">308</div>
<div class="g gb" style="left:266.5px;top:481px;letter-spacing:0.37px">Group</div>
<div class="a" style="left:55px;top:496px;width:285px;height:19px;border-left:1px solid #dadada;border-bottom:1px solid #dadada"></div>
<div class="g" style="left:59px;top:500px;letter-spacing:-0.22px">Carrot Cake</div>
<div class="g" style="left:188.2px;top:500px;letter-spacing:0.0px;">6</div>
<div class="g" style="left:266.5px;top:500px;letter-spacing:0.45px">Item</div>
<div class="a" style="left:55px;top:515px;width:285px;height:19px;border-left:1px solid #dadada;border-bottom:1px solid #dadada"></div>
<div class="g" style="left:59px;top:519px;letter-spacing:-0.22px">Fish Pie</div>
<div class="g" style="left:188.2px;top:519px;letter-spacing:0.0px;">14</div>
<div class="g" style="left:266.5px;top:519px;letter-spacing:0.45px">Item</div>
<div class="a" style="left:55px;top:534px;width:285px;height:19px;border-left:1px solid #dadada;border-bottom:1px solid #dadada"></div>
<div class="g" style="left:59px;top:538px;letter-spacing:-0.22px">Meat Pie</div>
<div class="g" style="left:188.2px;top:538px;letter-spacing:0.0px;">2</div>
<div class="g" style="left:266.5px;top:538px;letter-spacing:0.45px">Item</div>
<div class="a" style="left:37px;top:553px;width:303px;height:19px;border-left:1px solid #dadada;border-bottom:1px solid #dadada"></div>
<svg class="a" style="left:27px;top:559px" width="5" height="8" viewBox="0 0 5 8"><path d="M0 0 L4 4 L0 8Z" fill="#6a6a6a"/></svg>
<div class="g gb" style="left:41px;top:557px;letter-spacing:-0.03px">PIZZA</div>
<div class="g gb" style="left:189px;top:557px;letter-spacing:0.0px;transform:scaleX(1.19);transform-origin:0 0">115</div>
<div class="g gb" style="left:266.5px;top:557px;letter-spacing:0.37px">Group</div>
<div class="a" style="left:37px;top:572px;width:303px;height:19px;border-left:1px solid #dadada;border-bottom:1px solid #dadada"></div>
<svg class="a" style="left:27px;top:578px" width="5" height="8" viewBox="0 0 5 8"><path d="M0 0 L4 4 L0 8Z" fill="#6a6a6a"/></svg>
<div class="g gb" style="left:41px;top:576px;letter-spacing:-0.34px">PREPARED COMPONENTS</div>
<div class="g gb" style="left:189px;top:576px;letter-spacing:0.0px;transform:scaleX(1.19);transform-origin:0 0">38</div>
<div class="g gb" style="left:266.5px;top:576px;letter-spacing:0.37px">Group</div>
<div class="a" style="left:37px;top:591px;width:303px;height:19px;border-left:1px solid #dadada;border-bottom:1px solid #dadada"></div>
<svg class="a" style="left:27px;top:597px" width="5" height="8" viewBox="0 0 5 8"><path d="M0 0 L4 4 L0 8Z" fill="#6a6a6a"/></svg>
<div class="g gb" style="left:41px;top:595px;letter-spacing:-0.03px">ROLLS</div>
<div class="g gb" style="left:189px;top:595px;letter-spacing:0.0px;transform:scaleX(1.19);transform-origin:0 0">206</div>
<div class="g gb" style="left:266.5px;top:595px;letter-spacing:0.37px">Group</div>
<div class="a" style="left:37px;top:610px;width:303px;height:19px;border-left:1px solid #dadada;border-bottom:1px solid #dadada"></div>
<svg class="a" style="left:27px;top:616px" width="5" height="8" viewBox="0 0 5 8"><path d="M0 0 L4 4 L0 8Z" fill="#6a6a6a"/></svg>
<div class="g gb" style="left:41px;top:614px;letter-spacing:-0.03px">SALADS</div>
<div class="g gb" style="left:189px;top:614px;letter-spacing:0.0px;transform:scaleX(1.19);transform-origin:0 0">116</div>
<div class="g gb" style="left:266.5px;top:614px;letter-spacing:0.37px">Group</div>
<div class="a" style="left:37px;top:629px;width:303px;height:19px;border-left:1px solid #dadada;border-bottom:1px solid #dadada"></div>
<svg class="a" style="left:27px;top:635px" width="5" height="8" viewBox="0 0 5 8"><path d="M0 0 L4 4 L0 8Z" fill="#6a6a6a"/></svg>
<div class="g gb" style="left:41px;top:633px;letter-spacing:-0.03px">SANDWICHES</div>
<div class="g gb" style="left:189px;top:633px;letter-spacing:0.0px;transform:scaleX(1.19);transform-origin:0 0">183</div>
<div class="g gb" style="left:266.5px;top:633px;letter-spacing:0.37px">Group</div>
<div class="a" style="left:184px;top:21px;width:1px;height:621px;background:#dadada"></div>
<div class="a" style="left:262px;top:21px;width:1px;height:621px;background:#dadada"></div>
</div>
<div class="btn" style="left:1063px;top:782px;width:75px;height:23px;border-color:#b4b4b4"><span style="top:6px;right:2px;font-size:11px;color:#a0a0a8">Save</span></div>
</body></html>
